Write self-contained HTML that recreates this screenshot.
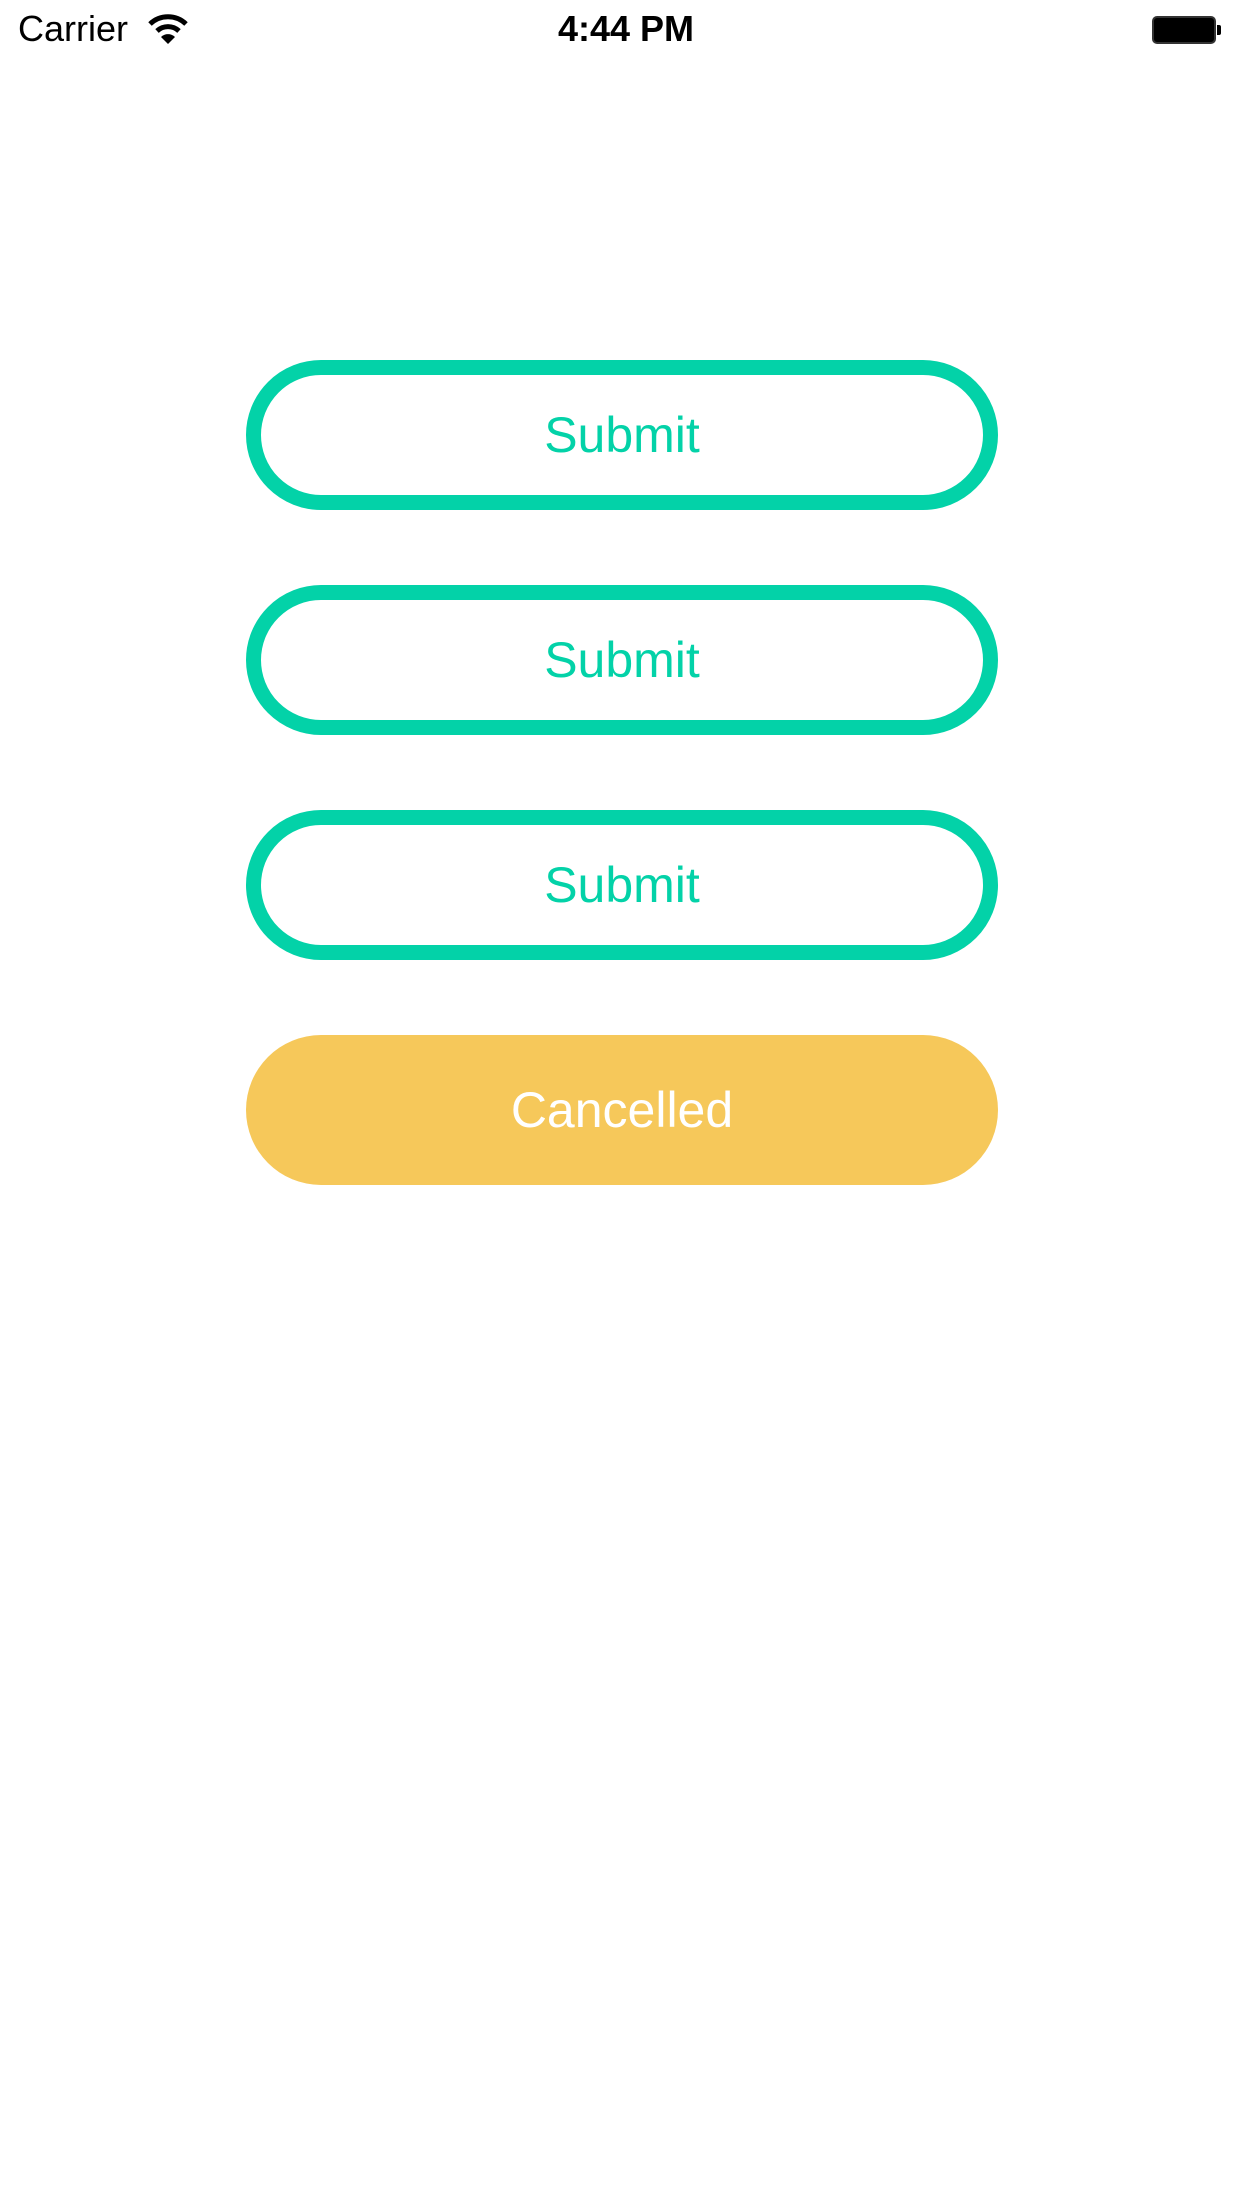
<!DOCTYPE html>
<html><head><style>
body{margin:0;width:1242px;height:2208px;background:#fff;position:relative;font-family:"Liberation Sans",sans-serif;overflow:hidden}
.sb{position:absolute;top:8px;font-size:36px;color:#000}
.btn{position:absolute;left:246px;width:752px;height:150px;box-sizing:border-box;border-radius:75px;display:flex;align-items:center;justify-content:center;font-size:50px}
.g{border:15px solid #03D2A8;color:#03D2A8;background:#fff}
.y{background:#F6C85A;color:#fff}
</style></head><body>
<div class="sb" style="left:18px">Carrier</div>
<svg style="position:absolute;left:148px;top:14px" width="40" height="32" viewBox="0 0 40 32">
<path d="M2 10 A26 26 0 0 1 38 10" stroke="#000" stroke-width="5" fill="none"/>
<path d="M9 17 A16 16 0 0 1 31 17" stroke="#000" stroke-width="5" fill="none"/>
<path d="M13 23 L20 30 L27 23 A10 10 0 0 0 13 23Z" fill="#000"/>
</svg>
<div class="sb" style="left:0;width:1252px;text-align:center;font-weight:bold">4:44 PM</div>
<div style="position:absolute;left:1152px;top:16px;width:64px;height:28px;border:2px solid #333;border-radius:5px;background:#000;box-sizing:border-box"></div>
<div style="position:absolute;left:1217px;top:25px;width:4px;height:10px;background:#000;border-radius:0 2px 2px 0"></div>
<div class="btn g" style="top:360px">Submit</div>
<div class="btn g" style="top:585px">Submit</div>
<div class="btn g" style="top:810px">Submit</div>
<div class="btn y" style="top:1035px">Cancelled</div>
</body></html>
